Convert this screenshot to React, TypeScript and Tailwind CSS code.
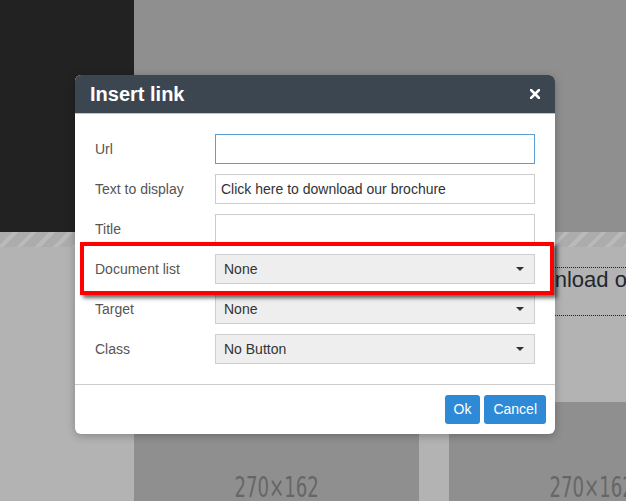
const Caret = () => (
    <svg width="8" height="4" viewBox="0 0 8 4" className="shrink-0">
        <path d="M0 0h8L4 4z" fill="#333" />
    </svg>
);

const fields = [
    { label: 'Url', kind: 'focus', value: '' },
    { label: 'Text to display', kind: 'input', value: 'Click here to download our brochure' },
    { label: 'Title', kind: 'input', value: '' },
    { label: 'Document list', kind: 'select', value: 'None' },
    { label: 'Target', kind: 'select', value: 'None' },
    { label: 'Class', kind: 'select', value: 'No Button' },
];

export default function App() {
    return (
        <div className="relative w-[626px] h-[501px] overflow-hidden bg-[#b3b3b3] font-['Liberation_Sans',Arial,sans-serif]">
            {/* Page behind the dialog */}
            <div className="flex h-[232px]">
                <div className="w-[134px] bg-[#222222]" />
                <div className="flex-1 bg-[#8f8f8f]" />
            </div>
            <div className="h-[15px] bg-[repeating-linear-gradient(135deg,#acacac_0_9px,#bababa_9px_13px)]" />
            <div className="ml-[134px] mt-[20px] h-[49px] border-t border-b border-dotted border-[#222] pl-[252px] text-[22px] leading-[24px] text-[#22262e] whitespace-nowrap overflow-hidden">
                Click here to download our brochure
            </div>
            <div className="mt-[86px] flex gap-[30px] pl-[134px]">
                {[0, 1].map((i) => (
                    <div
                        key={i}
                        className="w-[285px] h-[171px] shrink-0 bg-[#8f8f8f] flex items-center justify-center"
                    >
                        <span className="inline-block scale-x-[0.72] font-['DejaVu_Sans_Condensed',sans-serif] text-[28px] leading-none text-[#666666]">
                            270×162
                        </span>
                    </div>
                ))}
            </div>

            {/* Dialog */}
            <div className="absolute left-[75px] top-[75px] w-[480px] rounded-[6px] bg-white overflow-hidden shadow-[0_2px_8px_rgba(0,0,0,0.25)]">
                <div className="h-[39px] bg-[#3b4650] flex items-center justify-between pl-[15px] pr-[15px] border-b border-[#c4c4c4]">
                    <span className="text-white font-bold text-[20px] leading-none">Insert link</span>
                    <svg width="10" height="10" viewBox="0 0 10 10">
                        <path d="M1 1L9 9M9 1L1 9" stroke="#fff" strokeWidth="2.6" strokeLinecap="square" />
                    </svg>
                </div>
                <div className="flex flex-col gap-[10px] pt-[20px] pb-[20px] pl-[20px] pr-[20px]">
                    {fields.map((f) => (
                        <div key={f.label} className="flex items-center h-[30px]">
                            <div className="w-[120px] text-[14px] text-[#555]">{f.label}</div>
                            {f.kind === 'select' ? (
                                <div className="w-[320px] h-[30px] border border-[#cfcfcf] bg-[#eeeeee] flex items-center justify-between pl-[8px] pr-[10px] text-[14px] text-[#333]">
                                    <span>{f.value}</span>
                                    <Caret />
                                </div>
                            ) : (
                                <div
                                    className={`w-[320px] h-[30px] border bg-white flex items-center pl-[5px] text-[14px] text-[#333] ${
                                        f.kind === 'focus' ? 'border-[#5a9fd8]' : 'border-[#cccccc]'
                                    }`}
                                >
                                    {f.value}
                                </div>
                            )}
                        </div>
                    ))}
                </div>
                <div className="border-t border-[#cccccc] flex justify-end gap-[4px] pt-[10px] pb-[10px] pr-[9px]">
                    <button className="h-[29px] px-[9px] rounded-[3px] bg-[#2e8ad6] text-white text-[14px]">Ok</button>
                    <button className="h-[29px] px-[9px] rounded-[3px] bg-[#2e8ad6] text-white text-[14px]">Cancel</button>
                </div>
            </div>

            {/* Highlight */}
            <div className="absolute left-[80px] top-[242px] w-[474px] h-[53px] border-4 border-[#ff0000] shadow-[3px_3px_4px_rgba(0,0,0,0.6)]" />
        </div>
    );
}
